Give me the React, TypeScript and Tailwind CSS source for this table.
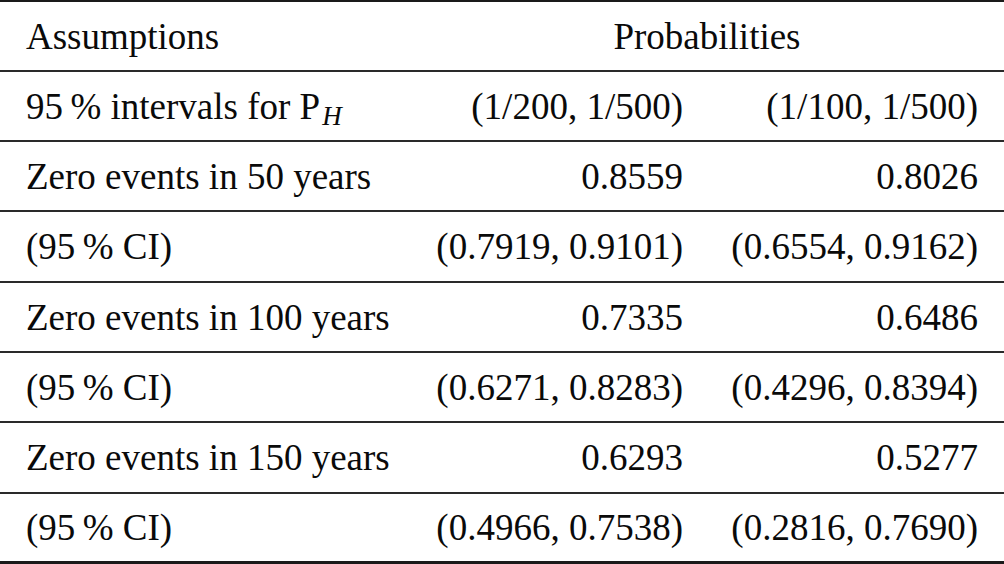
import React from 'react';

type Row = { label: React.ReactNode; a: string; b: string; h: string };

const ROWS: Row[] = [
  {
    label: (
      <>
        95{'\u2009'}% intervals for P
        <span className="relative top-[6px] ml-[2px] text-[27px] italic">H</span>
      </>
    ),
    a: '(1/200, 1/500)',
    b: '(1/100, 1/500)',
    h: 'h-[70px]',
  },
  { label: 'Zero events in 50 years', a: '0.8559', b: '0.8026', h: 'h-[70px]' },
  { label: '(95\u2009% CI)', a: '(0.7919, 0.9101)', b: '(0.6554, 0.9162)', h: 'h-[71px]' },
  { label: 'Zero events in 100 years', a: '0.7335', b: '0.6486', h: 'h-[70px]' },
  { label: '(95\u2009% CI)', a: '(0.6271, 0.8283)', b: '(0.4296, 0.8394)', h: 'h-[70px]' },
  { label: 'Zero events in 150 years', a: '0.6293', b: '0.5277', h: 'h-[71px]' },
  { label: '(95\u2009% CI)', a: '(0.4966, 0.7538)', b: '(0.2816, 0.7690)', h: 'h-[67px]' },
];

export default function App() {
  return (
    <div
      className="w-[1004px] h-[564px] bg-white text-[#0a0a0a] text-[37px] leading-none"
      style={{ fontFamily: '"Liberation Serif", "Times New Roman", serif' }}
    >
      <div className="border-t-2 border-b-[3px] border-[#1a1a1a]">
        {/* Header */}
        <div className="flex items-center h-[70px] border-b-2 border-[#2a2a2a]">
          <div className="w-[410px] pl-[26px]">Assumptions</div>
          <div className="flex-1 text-center">Probabilities</div>
        </div>

        {ROWS.map((r, i) => (
          <div
            key={i}
            className={`flex items-center ${r.h} ${i < ROWS.length - 1 ? 'border-b-2 border-[#2a2a2a]' : ''}`}
          >
            <div className="w-[410px] pl-[26px] whitespace-nowrap">{r.label}</div>
            <div className="w-[299px] pr-[26px] text-right whitespace-nowrap">{r.a}</div>
            <div className="flex-1 pr-[26px] text-right whitespace-nowrap">{r.b}</div>
          </div>
        ))}
      </div>
    </div>
  );
}
